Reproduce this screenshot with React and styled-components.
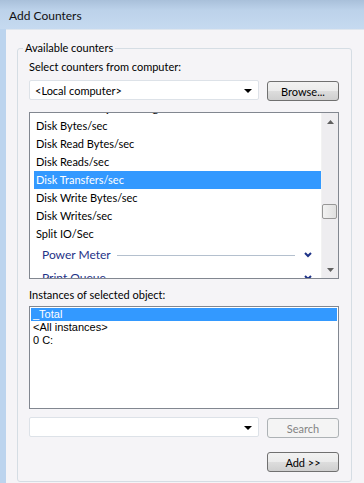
import React from 'react'
import styled, { createGlobalStyle } from 'styled-components'

const GlobalStyle = createGlobalStyle`
    html, body {
        margin: 0;
        padding: 0;
        overflow: hidden;
        background: #c0d6ee;
    }
    body {
        font-family: Lato, "Liberation Sans", sans-serif;
        font-size: 11px;
        color: #000;
    }
`

const Window = styled.div`
    display: flex;
    flex-direction: column;
    width: 364px;
    height: 483px;
    background: #bcd4ee;
`

const TitleBar = styled.div`
    height: 29px;
    display: flex;
    align-items: center;
    padding-left: 9px;
    padding-top: 1px;
    box-sizing: border-box;
    background: linear-gradient(#a9c0da 0%, #bcd2ea 35%, #c6daf0 100%);
    font-size: 12px;
    color: #111;
`

const Body = styled.div`
    flex: 1;
    display: flex;
    flex-direction: column;
    margin-left: 6px;
    padding-top: 11px;
    background: #f5f4f7;
    border-top: 1px solid #dfe6ee;
`

const Group = styled.fieldset`
    flex: 1;
    margin: 0 12px 1px 11px;
    padding: 0 12px 0 11px;
    border: 1px solid #d5dde4;
    border-radius: 3px;
    display: flex;
    flex-direction: column;
    min-width: 0;
`

const Legend = styled.legend`
    padding: 0 2px;
    margin-left: -6px;
    line-height: 14px;
`

const Label = styled.div`
    line-height: 15px;
    margin-top: ${({ $top }) => $top}px;
`

const Row = styled.div`
    display: flex;
    justify-content: space-between;
    align-items: flex-start;
    height: 21px;
    margin-top: ${({ $top }) => $top}px;
`

const Combo = styled.div`
    width: 230px;
    height: 20px;
    box-sizing: border-box;
    border: 1px solid #dde2e8;
    border-radius: 2px;
    background: #fff;
    display: flex;
    align-items: center;
    padding: 0 6px 0 5px;
`

const ComboText = styled.span`
    flex: 1;
    white-space: nowrap;
`

const Arrow = styled.span`
    width: 0;
    height: 0;
    border-left: 4px solid transparent;
    border-right: 4px solid transparent;
    border-top: 4px solid #000;
    margin-top: 1px;
`

const Button = styled.button`
    width: 72px;
    height: 20px;
    margin-top: ${({ $top }) => $top || 0}px;
    box-sizing: border-box;
    padding: 0;
    font-family: inherit;
    font-size: 11px;
    border-radius: 3px;
    border: 1px solid ${({ disabled }) => (disabled ? '#adb2b5' : '#707070')};
    color: ${({ disabled }) => (disabled ? '#838383' : '#000')};
    background: ${({ disabled }) =>
        disabled ? '#f4f4f4' : 'linear-gradient(#f2f2f2 0%, #ebebeb 50%, #dddddd 51%, #cfcfcf 100%)'};
`

const CounterList = styled.div`
    margin-top: 11px;
    height: 167px;
    box-sizing: border-box;
    border: 1px solid #828790;
    background: #fff;
    display: flex;
`

const Items = styled.div`
    flex: 1;
    overflow: hidden;
`

const ItemsScroll = styled.div`
    margin-top: -14px;
`

const Item = styled.div`
    height: 18px;
    line-height: 18px;
    margin-left: 4px;
    padding-left: 2px;
    white-space: nowrap;
    background: ${({ $selected }) => ($selected ? '#3399ff' : 'transparent')};
    color: ${({ $selected }) => ($selected ? '#fff' : '#000')};
`

const Category = styled.div`
    height: 23px;
    margin-left: 4px;
    padding: 0 9px 0 8px;
    display: flex;
    align-items: center;
    color: #1e3287;
    font-size: 12px;
    white-space: nowrap;
`

const CategoryLine = styled.span`
    flex: 1;
    height: 1px;
    background: #b4c0ce;
    margin: 1px 9px 0 6px;
`

const ScrollBar = styled.div`
    width: 17px;
    display: flex;
    flex-direction: column;
    background: #eeedf0;
    border-left: 1px solid #f2f2f2;
    box-sizing: border-box;
`

const ScrollButton = styled.div`
    height: 17px;
    display: flex;
    align-items: center;
    justify-content: center;
`

const ScrollTrack = styled.div`
    flex: 1;
`

const Thumb = styled.div`
    margin-top: ${({ $top }) => $top}px;
    width: 15px;
    height: 15px;
    box-sizing: border-box;
    border: 1px solid #979797;
    border-radius: 2px;
    background: linear-gradient(90deg, #f2f2f2, #e0e0e0);
`

const InstanceList = styled.div`
    margin-top: 4px;
    height: 103px;
    box-sizing: border-box;
    border: 1px solid #828790;
    background: #fff;
    padding: 1px 1px 0 1px;
    font-family: "Liberation Sans", Arial, sans-serif;
    font-size: 11px;
`

const Instance = styled.div`
    height: 13px;
    line-height: 13px;
    padding-left: 2px;
    white-space: nowrap;
    background: ${({ $selected }) => ($selected ? '#3399ff' : 'transparent')};
    color: ${({ $selected }) => ($selected ? '#fff' : '#000')};
`

const Footer = styled.div`
    display: flex;
    justify-content: flex-end;
    margin-top: 14px;
`

const Chevron = () => (
    <svg width="8" height="6" viewBox="0 0 8 6">
        <path d="M1 1 L4 4 L7 1" fill="none" stroke="#1e3287" strokeWidth="2" />
    </svg>
)

const ScrollArrow = ({ up }) => (
    <svg width="7" height="4" viewBox="0 0 7 4">
        <path d={up ? 'M0 4 L3.5 0 L7 4 Z' : 'M0 0 L3.5 4 L7 0 Z'} fill="#606060" />
    </svg>
)

const counters = [
    'Current Disk Queue Length',
    'Disk Bytes/sec',
    'Disk Read Bytes/sec',
    'Disk Reads/sec',
    'Disk Transfers/sec',
    'Disk Write Bytes/sec',
    'Disk Writes/sec',
    'Split IO/Sec',
]

const instances = ['_Total', '<All instances>', '0 C:']

const App = () => {
    return (
        <>
            <GlobalStyle />
            <Window>
                <TitleBar>Add Counters</TitleBar>
                <Body>
                    <Group>
                        <Legend>Available counters</Legend>
                        <Label $top={4}>Select counters from computer:</Label>
                        <Row $top={6}>
                            <Combo>
                                <ComboText>&lt;Local computer&gt;</ComboText>
                                <Arrow />
                            </Combo>
                            <Button $top={1}>Browse...</Button>
                        </Row>
                        <CounterList>
                            <Items>
                                <ItemsScroll>
                                    {counters.map((c) => (
                                        <Item key={c} $selected={c === 'Disk Transfers/sec'}>
                                            {c}
                                        </Item>
                                    ))}
                                    <Category>
                                        Power Meter
                                        <CategoryLine />
                                        <Chevron />
                                    </Category>
                                    <Category>
                                        Print Queue
                                        <CategoryLine />
                                        <Chevron />
                                    </Category>
                                </ItemsScroll>
                            </Items>
                            <ScrollBar>
                                <ScrollButton><ScrollArrow up /></ScrollButton>
                                <ScrollTrack>
                                    <Thumb $top={74} />
                                </ScrollTrack>
                                <ScrollButton><ScrollArrow /></ScrollButton>
                            </ScrollBar>
                        </CounterList>
                        <Label $top={8}>Instances of selected object:</Label>
                        <InstanceList>
                            {instances.map((i) => (
                                <Instance key={i} $selected={i === '_Total'}>
                                    {i}
                                </Instance>
                            ))}
                        </InstanceList>
                        <Row $top={8}>
                            <Combo>
                                <ComboText />
                                <Arrow />
                            </Combo>
                            <Button $top={1} disabled>Search</Button>
                        </Row>
                        <Footer>
                            <Button>Add &gt;&gt;</Button>
                        </Footer>
                    </Group>
                </Body>
            </Window>
        </>
    )
}

export default App
